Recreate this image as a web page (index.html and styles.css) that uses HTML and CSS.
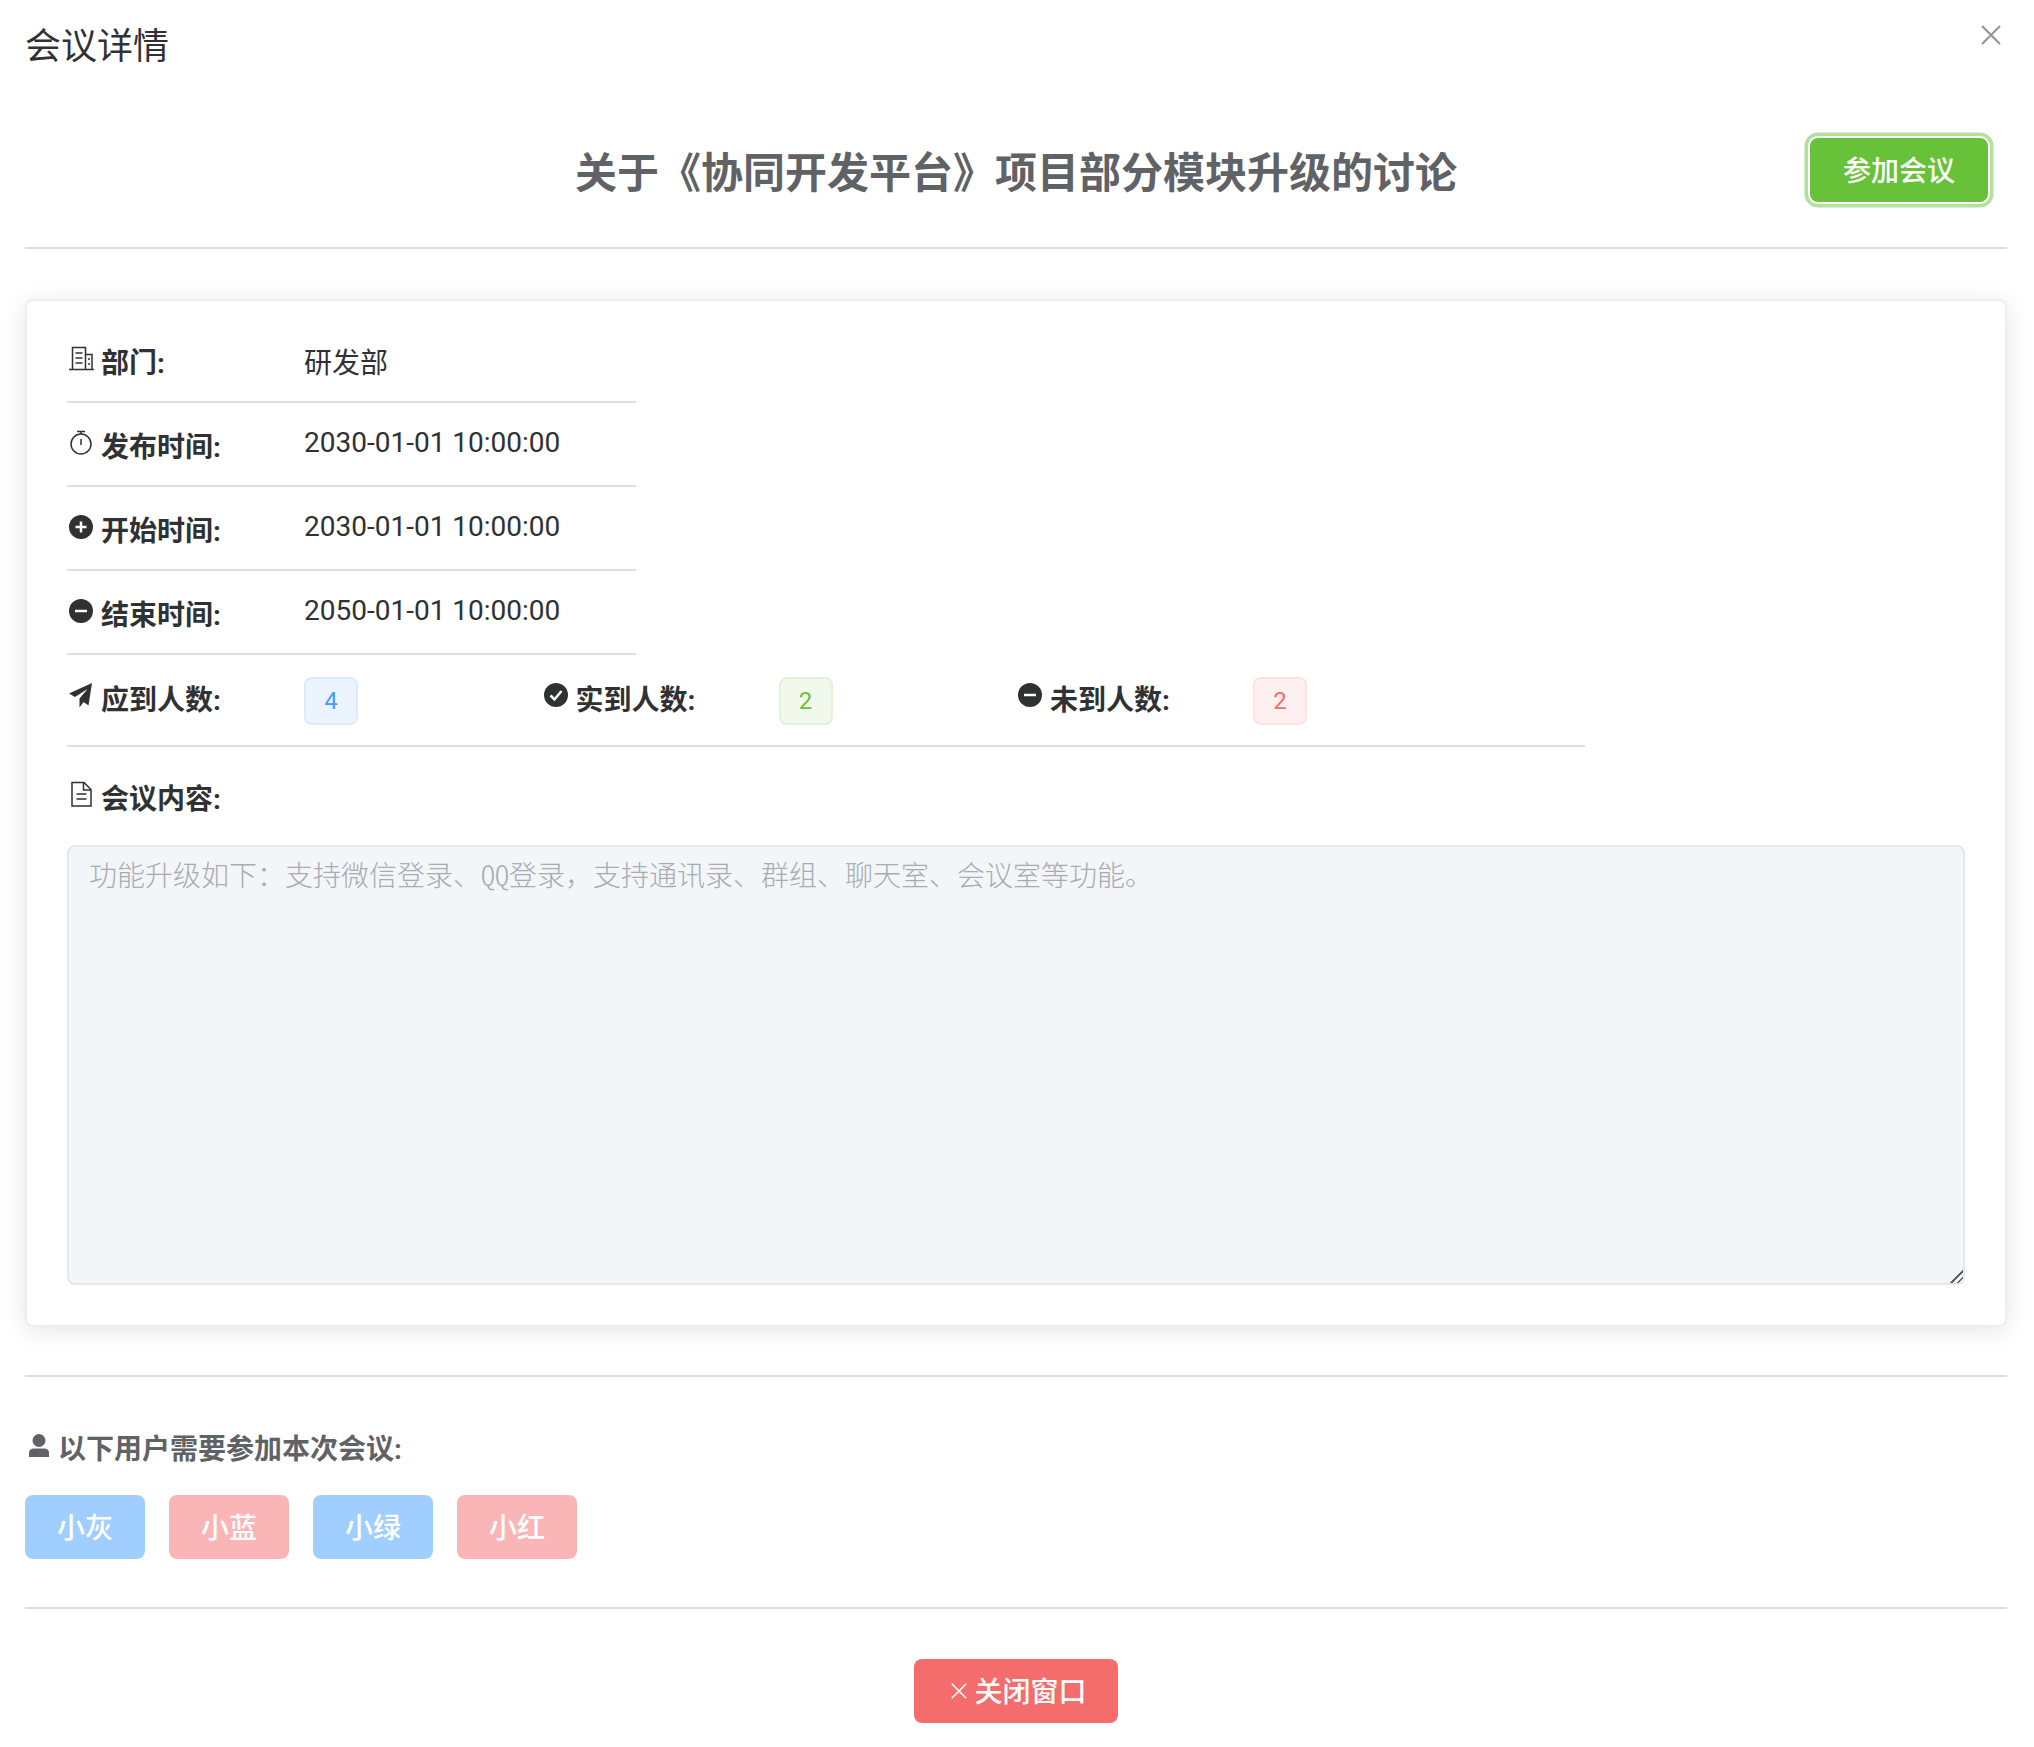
FILE: index.html
```html
<!DOCTYPE html>
<html lang="zh-CN">
<head>
<meta charset="utf-8">
<title>会议详情</title>
<link rel="stylesheet" href="styles.css">
</head>
<body>
<div class="dialog">
  <header class="dialog-head">
    <span class="dialog-title">会议详情</span>
    <button class="close-x" aria-label="关闭"><svg viewBox="0 0 20 20" class="x-svg"><path d="M1 1L19 19M19 1L1 19"/></svg></button>
  </header>
  <section class="hero">
    <span></span>
    <h1 class="hero-title">关于《协同开发平台》项目部分模块升级的讨论</h1>
    <button class="join-btn">参加会议</button>
  </section>
  <hr class="rule">
  <section class="card">
    <div class="row row-first">
      <div class="label">
        <svg class="ic" viewBox="0 0 28 28"><path class="ln" d="M2 25.500H27M5.500 25V3.500H18.500V25M18.500 10.500H25V25M8.500 9H15.500M8.500 14H15.500M8.500 19H15.500M21 15H23M21 20H23"/></svg>
        <span>部门:</span>
      </div>
      <div class="value">研发部</div>
    </div>
    <div class="row">
      <div class="label">
        <svg class="ic" viewBox="0 0 28 28"><circle class="ln" cx="14" cy="15" r="10"/><path class="ln" d="M10 2.500H18M14 3V5M14 10V16"/></svg>
        <span>发布时间:</span>
      </div>
      <div class="value">2030-01-01 10:00:00</div>
    </div>
    <div class="row">
      <div class="label">
        <svg class="ic" viewBox="0 0 28 28"><circle class="fl" cx="14" cy="14" r="12"/><path class="wl" d="M14 8.500V19.500M8.500 14H19.500"/></svg>
        <span>开始时间:</span>
      </div>
      <div class="value">2030-01-01 10:00:00</div>
    </div>
    <div class="row">
      <div class="label">
        <svg class="ic" viewBox="0 0 28 28"><circle class="fl" cx="14" cy="14" r="12"/><path class="wl" d="M8 14H20"/></svg>
        <span>结束时间:</span>
      </div>
      <div class="value">2050-01-01 10:00:00</div>
    </div>
    <div class="row row-stats">
      <div class="stat">
        <div class="label">
          <svg class="ic" viewBox="0 0 28 28"><path class="fl" d="M25 2L2 12.500L8 16L20.500 8L12.500 17.500V26.500L16.500 21L21.500 24.500Z"/></svg>
          <span>应到人数:</span>
        </div>
        <span class="tag tag-blue">4</span>
      </div>
      <div class="stat">
        <div class="label">
          <svg class="ic" viewBox="0 0 28 28"><circle class="fl" cx="14" cy="14" r="12"/><path class="wl" d="M8.500 14.500L12.500 18.500L19.500 10"/></svg>
          <span>实到人数:</span>
        </div>
        <span class="tag tag-green">2</span>
      </div>
      <div class="stat">
        <div class="label">
          <svg class="ic" viewBox="0 0 28 28"><circle class="fl" cx="14" cy="14" r="12"/><path class="wl" d="M8 14H20"/></svg>
          <span>未到人数:</span>
        </div>
        <span class="tag tag-red">2</span>
      </div>
    </div>
    <div class="label content-label">
      <svg class="ic" viewBox="0 0 28 28"><path class="ln" d="M5 2.500H17L24 9.500V26H5ZM16.500 3V10H24M9.500 14H19.500M9.500 19H19.500"/></svg>
      <span>会议内容:</span>
    </div>
    <div class="content">功能升级如下：支持微信登录、<span class="half">QQ</span>登录，支持通讯录、群组、聊天室、会议室等功能。</div>
  </section>
  <hr class="rule rule-b">
  <div class="label users-label">
    <svg class="ic" viewBox="0 0 28 28"><circle class="fg" cx="14" cy="8.500" r="6.500"/><path class="fg" d="M4 25V21Q4 16.500 9 16.500H19Q24 16.500 24 21V25Z"/></svg>
    <span>以下用户需要参加本次会议:</span>
  </div>
  <div class="users">
    <button class="user user-blue">小灰</button>
    <button class="user user-red">小蓝</button>
    <button class="user user-blue">小绿</button>
    <button class="user user-red">小红</button>
  </div>
  <hr class="rule rule-c">
  <footer class="foot">
    <button class="close-btn"><svg viewBox="0 0 20 20" class="x-small"><path d="M2 2L18 18M18 2L2 18"/></svg><span>关闭窗口</span></button>
  </footer>
</div>
</body>
</html>
```
FILE: styles.css
```css
* { box-sizing: border-box; }
html, body { margin: 0; padding: 0; background: #fff; }
body {
  font-family: "Roboto", "Noto Sans CJK SC", sans-serif;
  font-size: 28px;
  color: #303133;
}
button { font-family: inherit; border: 0; cursor: pointer; padding: 0; }
.dialog { width: 2034px; height: 1747px; padding: 0 27px 0 25px; position: relative; overflow: hidden; }
.dialog-head { height: 90px; display: flex; align-items: center; padding-top: 4px; }
.dialog-title { font-size: 36px; color: #303133; line-height: 48px; }
.close-x { position: absolute; top: 25px; left: 1981px; width: 20px; height: 20px; background: none; }
.x-svg { display: block; width: 20px; height: 20px; fill: none; stroke: #909399; stroke-width: 2; }
.hero { display: grid; grid-template-columns: 1fr auto 1fr; align-items: center; margin-top: 48px; height: 64px; }
.hero-title { margin: 0; font-size: 42px; font-weight: 700; color: #606266; line-height: 64px; padding-top: 3px; }
.join-btn {
  justify-self: end; margin: 0 19px 4px 0;
  width: 178px; height: 64px; padding-bottom: 2px; border-radius: 8px;
  background: #67c23a; color: #fff; font-size: 28px; font-weight: 500;
  box-shadow: 0 0 0 2px #fff, 0 0 0 5.500px #b3e19d;
}
.rule { border: 0; height: 2px; background: #dcdfe6; margin: 45px 0 0; }
.card {
  margin-top: 50px; height: 1028px; padding: 41px 40px 40px;
  border: 2px solid #ebeef5; border-radius: 8px; background: #fff;
  box-shadow: 0 4px 24px rgba(0,0,0,.1);
}
.row { display: flex; align-items: center; width: 569px; height: 84px; border-bottom: 2px solid #dcdfe6; }
.row-first { height: 61px; padding-bottom: 22px; }
.label { display: flex; align-items: center; gap: 6px; font-weight: 700; color: #303133; line-height: 40px; }
.row > .label, .stat > .label { width: 237px; flex: none; padding-top: 8px; }
.row-first > .label { padding-top: 6px; }
.ic { width: 28px; height: 28px; flex: none; margin-bottom: 11px; }
.row-first .ic { margin-bottom: 12px; }
.value { line-height: 40px; padding-bottom: 2px; }
.row-first .value { padding-bottom: 0; padding-top: 6px; }
.ln { fill: none; stroke: #303133; stroke-width: 1.500; }
.fl { fill: #303133; }
.fg { fill: #606266; }
.wl { fill: none; stroke: #fff; stroke-width: 2.500; }
.row-stats { width: 1518px; height: 92px; }
.stat { display: flex; align-items: center; width: 474.500px; }
.stat > .label { padding-top: 2px; }
.row-stats .ic { margin-bottom: 12px; }
.tag { display: flex; align-items: center; justify-content: center; width: 54px; height: 48px; margin-top: 1px; border: 2px solid; border-radius: 8px; font-size: 24px; }
.tag-blue { background: #ecf5ff; border-color: #d9ecff; color: #409eff; }
.tag-green { background: #f0f9eb; border-color: #e1f3d8; color: #67c23a; }
.tag-red { background: #fef0f0; border-color: #fde2e2; color: #f56c6c; }
.content-label { margin-top: 33px; }
.content-label .ic { margin-bottom: 12px; }
.content {
  width: 100%; height: 440px; margin-top: 25px; padding: 7px 20px;
  border: 2px solid #e4e7ed; border-radius: 8px; background: #f3f6f9;
  color: #a8abb2; font-family: "Noto Sans CJK SC", serif; font-size: 28px; font-weight: 300; line-height: 40px;
  overflow: auto; resize: vertical;
}
.half { font-feature-settings: "hwid"; }
.content::-webkit-resizer {
  background: linear-gradient(135deg, transparent 12px, #606266 12px, #606266 13.500px, transparent 13.500px, transparent 16.600px, #606266 16.600px, #606266 18.100px, transparent 18.100px);
}
.rule-b { margin-top: 48px; }
.users-label { margin-top: 53px; gap: 5px; color: #606266; font-weight: 700; }
.users-label .ic { margin-bottom: 8px; }
.users { display: flex; gap: 24px; margin-top: 25px; }
.user { width: 120px; height: 64px; padding-bottom: 3px; border-radius: 8px; color: #fff; font-size: 28px; font-weight: 500; }
.user-blue { background: #a0cfff; }
.user-red { background: #fab6b6; }
.rule-c { margin-top: 48px; }
.foot { display: flex; justify-content: center; margin-top: 50px; }
.close-btn { display: flex; align-items: center; justify-content: center; gap: 6px; width: 204px; height: 64px; padding: 0 0 3px 5px; border-radius: 8px; background: #f56c6c; color: #fff; font-size: 28px; font-weight: 500; }
.x-small { width: 18px; height: 18px; margin-top: 3px; fill: none; stroke: #fff; stroke-width: 1.800; }
```
